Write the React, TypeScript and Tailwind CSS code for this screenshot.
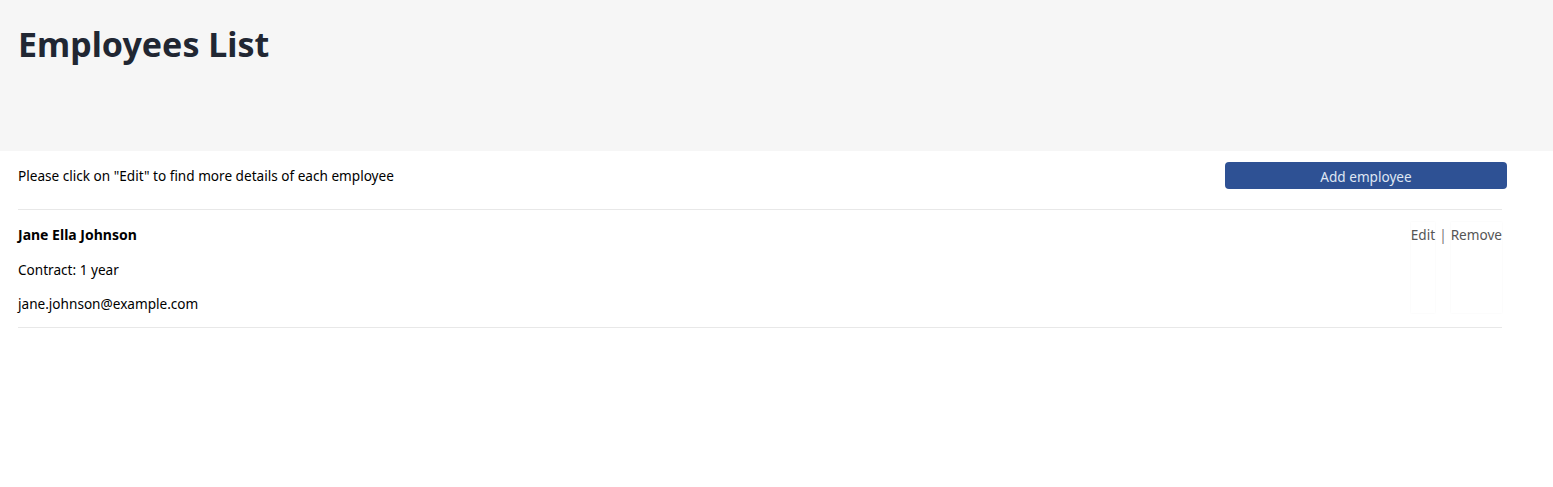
const employees = [
  { name: 'Jane Ella Johnson', contract: '1 year', email: 'jane.johnson@example.com' },
];

export default function App() {
  return (
    <div className="min-h-[487px] bg-white text-black" style={{ fontFamily: '"Noto Sans", "Open Sans", sans-serif' }}>
      <header className="h-[151px] bg-[#f6f6f6] px-[18px] pt-[19px]">
        <h1 className="text-[34px] leading-[50px] font-bold text-[#212733]">Employees List</h1>
      </header>

      <main className="pl-[18px] pr-[51px]">
        <div className="flex items-start justify-between h-[59px] pt-[11px] border-b border-[#e8e8e8]">
          <p className="text-[13.6px] leading-[27px]">Please click on "Edit" to find more details of each employee</p>
          <button className="w-[282px] h-[27px] -mr-[5px] pt-[2px] rounded-[4px] bg-[#2e5194] text-[13.6px] leading-[25px] text-[#dfe6f3]">
            Add employee
          </button>
        </div>

        {employees.map((e, i) => (
          <div key={i} className="flex justify-between border-b border-[#e8e8e8] pt-[15px] pb-[13px]">
            <div className="text-[13.6px] leading-[20px]">
              <p className="font-bold text-[14px]">{e.name}</p>
              <p className="mt-[15px]">{`Contract: ${e.contract}`}</p>
              <p className="mt-[14px]">{e.email}</p>
            </div>
            <div className="flex items-start -mt-[3px] text-[13.6px] text-[#555] leading-[20px]">
              <a className="pt-[3px] h-[91px] shadow-[0_0_2px_rgba(0,0,0,0.04)]">Edit</a>
              <span className="px-[4px] pt-[3px] text-[#777]">|</span>
              <a className="pt-[3px] h-[91px] shadow-[0_0_2px_rgba(0,0,0,0.04)]">Remove</a>
            </div>
          </div>
        ))}
      </main>
    </div>
  );
}
